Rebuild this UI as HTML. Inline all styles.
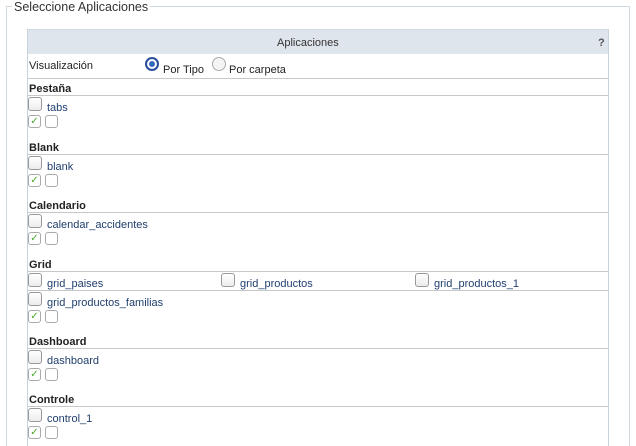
<!DOCTYPE html><html><head><style>
html,body{margin:0;width:636px;height:446px;overflow:hidden}
body{background:#fff;font-family:"Liberation Sans",sans-serif;position:relative}
.a{position:absolute}
.fs{left:6px;top:6px;width:622px;height:440px;border:1px solid #cfd8df;border-bottom:none}
.lg{left:12px;top:0;background:#fff;padding:0 2px;font-size:12.5px;color:#333}
.tb{left:27px;top:29px;width:580px;height:417px;border:1px solid #c9d3dc;border-top:none;border-bottom:none}
.hd{left:28px;top:29px;width:580px;height:24px;background:#dfe5ec;border-top:1px solid #d0d8e0}
.ln{left:28px;width:580px;height:1px;background:#c8c8c8}
.h{font-size:11px;font-weight:bold;color:#222}
.t{font-size:11px;color:#1f3f6e}
.cb{width:12px;height:12px;border:1px solid #999;border-radius:3px;background:linear-gradient(#fff,#ececec)}
.sc{width:11px;height:11px;border:1px solid #aaa;border-radius:3px;background:#fff}
.ck{color:#4caa2c;font-size:10px;line-height:11px;text-align:center}
</style></head><body>
<div class="a fs"></div>
<div class="a lg">Seleccione Aplicaciones</div>
<div class="a tb"></div>
<div class="a hd"></div>
<div class="a" style="left:277px;top:37px;font-size:11px;color:#333">Aplicaciones</div>
<div class="a" style="left:598px;top:37px;font-size:11px;font-weight:bold;color:#555">?</div>
<div class="a" style="left:29px;top:60px;font-size:11px;color:#222">Visualización</div>
<div class="a" style="left:145px;top:57px;width:10px;height:10px;border-radius:50%;border:2px solid #2a4f9c;background:#fff;box-shadow:inset 0 0 0 2px #fff,inset 0 0 0 5px #3a66c0"></div>
<div class="a" style="left:163px;top:64px;font-size:11px;color:#222">Por Tipo</div>
<div class="a" style="left:212px;top:57px;width:12px;height:12px;border-radius:50%;border:1px solid #aaa;background:#f4f4f4"></div>
<div class="a" style="left:229px;top:64px;font-size:11px;color:#222">Por carpeta</div>
<div class="a ln" style="top:78px"></div>
<div id="s"></div>
<script>
var secs=[["Pestaña",95,"tabs"],["Blank",154,"blank"],["Calendario",212,"calendar_accidentes"],["Dashboard",348,"dashboard"],["Controle",406,"control_1"]];
var h="";
function item(x,y,name){return '<div class="a cb" style="left:'+x+'px;top:'+y+'px"></div><div class="a t" style="left:'+(x+19)+'px;top:'+(y+5)+'px">'+name+'</div>';}
function smalls(y){return '<div class="a sc ck" style="left:28px;top:'+y+'px">✓</div><div class="a sc" style="left:45px;top:'+y+'px"></div>';}
secs.forEach(function(s){var L=s[1];h+='<div class="a h" style="left:29px;top:'+(L-12)+'px">'+s[0]+'</div><div class="a ln" style="top:'+L+'px"></div>'+item(28,L+2,s[2])+smalls(L+20);});
var L=271;h+='<div class="a h" style="left:29px;top:'+(L-12)+'px">Grid</div><div class="a ln" style="top:'+L+'px"></div>';
h+=item(28,273,"grid_paises")+item(221,273,"grid_productos")+item(415,273,"grid_productos_1");
h+='<div class="a ln" style="top:290px"></div>'+item(28,292,"grid_productos_familias")+smalls(310);
document.getElementById("s").innerHTML=h;
</script>
</body></html>
